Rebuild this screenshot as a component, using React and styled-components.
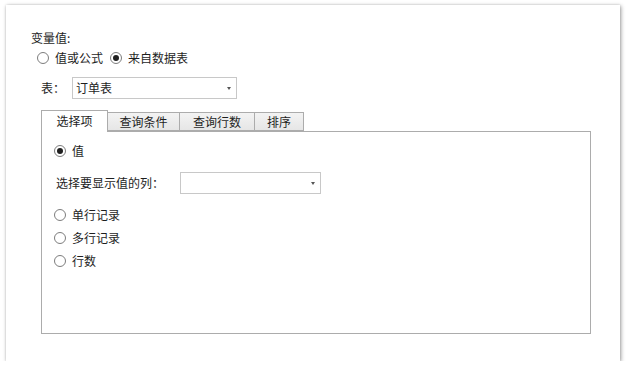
import React from "react";
import styled, { createGlobalStyle } from "styled-components";

const GlobalStyle = createGlobalStyle`
  html, body { margin: 0; padding: 0; background: #fff; }
  body {
    font-family: "Noto Sans CJK SC", "Noto Sans", sans-serif;
    font-size: 12px;
    color: #1e1e1e;
  }
`;

const Card = styled.div`
  margin: 5px 0 0 6px;
  width: 614px;
  height: 356px;
  box-sizing: border-box;
  background: #fff;
  box-shadow: 1px 1px 4px rgba(0, 0, 0, 0.38), 0 0 2px rgba(0, 0, 0, 0.12);
  padding: 25px 0 0 25px;
  display: flex;
  flex-direction: column;
`;

const SectionLabel = styled.div`
  height: 16px;
  line-height: 16px;
`;

const RadioGroup = styled.div`
  display: flex;
  align-items: center;
  gap: ${(p) => p.$gap || 7}px;
  height: 16px;
  margin: ${(p) => p.$margin || "0"};
`;

const Option = styled.label`
  display: inline-flex;
  align-items: center;
  gap: 6px;
  height: 16px;
  line-height: 16px;
  white-space: nowrap;
`;

const Circle = styled.span`
  width: 12px;
  height: 12px;
  box-sizing: border-box;
  border: 1px solid #7d7d7d;
  border-radius: 50%;
  background: #fff;
  display: inline-flex;
  align-items: center;
  justify-content: center;
  &::after {
    content: "";
    width: 6px;
    height: 6px;
    border-radius: 50%;
    background: ${(p) => (p.$checked ? "#1f1f1f" : "transparent")};
  }
`;

const Radio = ({ checked, children }) => (
  <Option>
    <Circle $checked={checked} />
    <span>{children}</span>
  </Option>
);

const FieldRow = styled.div`
  display: flex;
  align-items: center;
  height: 22px;
  margin: ${(p) => p.$margin || "0"};
`;

const FieldLabel = styled.span`
  width: ${(p) => p.$width}px;
  flex: none;
  line-height: 16px;
`;

const SelectBox = styled.div`
  width: ${(p) => p.$width}px;
  height: 22px;
  box-sizing: border-box;
  border: 1px solid #c8c8c8;
  background: #fff;
  display: flex;
  align-items: center;
  justify-content: space-between;
  padding: 0 5px 0 3px;
  line-height: 16px;
`;

const Caret = styled.span`
  width: 0;
  height: 0;
  border-left: 2.5px solid transparent;
  border-right: 2.5px solid transparent;
  border-top: 3px solid #555;
  margin-top: 1px;
`;

const Select = ({ width, value }) => (
  <SelectBox $width={width}>
    <span>{value}</span>
    <Caret />
  </SelectBox>
);

const Tabs = styled.div`
  margin: 11px 0 0 10px;
  width: 550px;
  display: flex;
  flex-direction: column;
`;

const TabStrip = styled.div`
  display: flex;
  align-items: flex-end;
  height: 21px;
`;

const Tab = styled.div`
  position: relative;
  box-sizing: border-box;
  border: 1px solid #acacac;
  margin-left: -1px;
  &:first-child { margin-left: 0; }
  display: flex;
  align-items: center;
  justify-content: center;
  line-height: 16px;
  width: ${(p) => p.$width}px;
  height: ${(p) => (p.$active ? 22 : 19)}px;
  margin-bottom: ${(p) => (p.$active ? -1 : 0)}px;
  background: ${(p) =>
    p.$active ? "#fff" : "linear-gradient(#f3f3f3, #e6e6e6)"};
  border-bottom: ${(p) => (p.$active ? "none" : "1px solid #acacac")};
  padding-bottom: ${(p) => (p.$active ? 2 : 0)}px;
  z-index: ${(p) => (p.$active ? 2 : 1)};
`;

const Panel = styled.div`
  height: 203px;
  box-sizing: border-box;
  border: 1px solid #acacac;
  padding: 11px 0 0 12px;
  display: flex;
  flex-direction: column;
`;

const RadioList = styled.div`
  display: flex;
  flex-direction: column;
  gap: 7px;
  margin-top: 13px;
`;

export default function App() {
  return (
    <>
      <GlobalStyle />
      <Card>
        <SectionLabel>变量值:</SectionLabel>
        <RadioGroup $margin="4px 0 0 6px">
          <Radio>值或公式</Radio>
          <Radio checked>来自数据表</Radio>
        </RadioGroup>
        <FieldRow $margin="11px 0 0 10px">
          <FieldLabel $width={31}>表：</FieldLabel>
          <Select width={165} value="订单表" />
        </FieldRow>
        <Tabs>
          <TabStrip>
            <Tab $active $width={67}>选择项</Tab>
            <Tab $width={73}>查询条件</Tab>
            <Tab $width={76}>查询行数</Tab>
            <Tab $width={50}>排序</Tab>
          </TabStrip>
          <Panel>
            <RadioGroup>
              <Radio checked>值</Radio>
            </RadioGroup>
            <FieldRow $margin="13px 0 0 2px">
              <FieldLabel $width={124}>选择要显示值的列：</FieldLabel>
              <Select width={141} value="" />
            </FieldRow>
            <RadioList>
              <Radio>单行记录</Radio>
              <Radio>多行记录</Radio>
              <Radio>行数</Radio>
            </RadioList>
          </Panel>
        </Tabs>
      </Card>
    </>
  );
}
